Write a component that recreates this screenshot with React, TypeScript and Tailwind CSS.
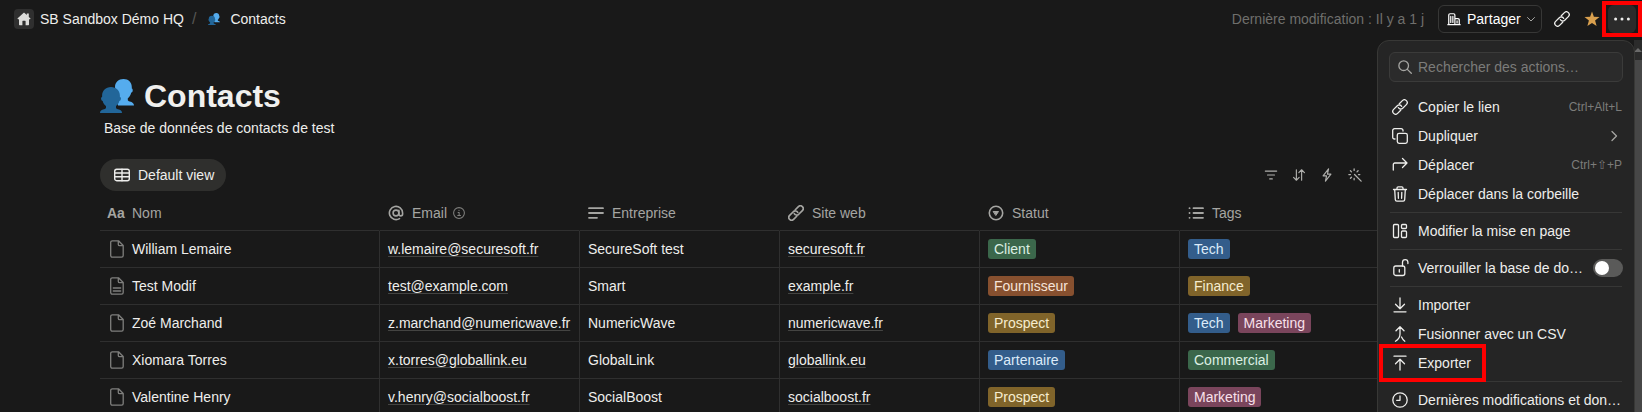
import type { ReactNode } from 'react';
import clsx from 'clsx';

type Tag = { label: string; color: keyof typeof tagColors };

const tagColors = {
  green: 'bg-[#3b674b] text-[#dcefe3]',
  orange: 'bg-[#87502f] text-[#f6e3d8]',
  yellow: 'bg-[#80642a] text-[#f6eccf]',
  blue: 'bg-[#335d8b] text-[#dcebf9]',
  pink: 'bg-[#7a455c] text-[#f8e0ea]',
};

const contacts: { name: string; filled?: boolean; email: string; company: string; site: string; status: Tag; tags: Tag[] }[] = [
  { name: 'William Lemaire', email: 'w.lemaire@securesoft.fr', company: 'SecureSoft test', site: 'securesoft.fr', status: { label: 'Client', color: 'green' }, tags: [{ label: 'Tech', color: 'blue' }] },
  { name: 'Test Modif', filled: true, email: 'test@example.com', company: 'Smart', site: 'example.fr', status: { label: 'Fournisseur', color: 'orange' }, tags: [{ label: 'Finance', color: 'yellow' }] },
  { name: 'Zoé Marchand', email: 'z.marchand@numericwave.fr', company: 'NumericWave', site: 'numericwave.fr', status: { label: 'Prospect', color: 'yellow' }, tags: [{ label: 'Tech', color: 'blue' }, { label: 'Marketing', color: 'pink' }] },
  { name: 'Xiomara Torres', email: 'x.torres@globallink.eu', company: 'GlobalLink', site: 'globallink.eu', status: { label: 'Partenaire', color: 'blue' }, tags: [{ label: 'Commercial', color: 'green' }] },
  { name: 'Valentine Henry', email: 'v.henry@socialboost.fr', company: 'SocialBoost', site: 'socialboost.fr', status: { label: 'Prospect', color: 'yellow' }, tags: [{ label: 'Marketing', color: 'pink' }] },
];

/* ---------- icons ---------- */

function Icon({ children, className, width = 1.3 }: { children: ReactNode; className?: string; width?: number }) {
  return (
    <svg viewBox="0 0 16 16" className={clsx('shrink-0', className ?? 'size-4')} fill="none" stroke="currentColor" strokeWidth={width} strokeLinecap="round" strokeLinejoin="round" aria-hidden="true">
      {children}
    </svg>
  );
}

const LinkIcon = ({ className, width = 1.3 }: { className?: string; width?: number }) => (
  <Icon className={className} width={width}>
    <g transform="rotate(-45 8 8)">
      <path d="M9.800 5.200H14.200a2.800 2.800 0 0 1 0 5.600H9a2.800 2.800 0 0 1-2.600-3.600" />
      <path d="M6.200 10.800H1.800a2.800 2.800 0 0 1 0-5.600H7a2.800 2.800 0 0 1 2.600 3.600" />
    </g>
  </Icon>
);

const People = ({ className }: { className: string }) => (
  <svg viewBox="0 0 34 34" className={clsx('shrink-0', className)} aria-hidden="true">
    <path fill="#55acee" d="M23.5 0c5 0 8.300 3.300 8.300 8v1.400c1 .1 1 1.800.9 2.600-.1.900-.8 1.700-1.500 1.600-.4 2.500-1.700 4.500-3.400 5.700v1.400c0 1 .6 1.300 2 1.700 2.500.7 4.200 1.600 4.200 4.100H18l-3-18.400C15 3.300 18.500 0 23.500 0Z" />
    <path fill="#226699" d="M11 8c5.300 0 8.900 3.500 8.900 8.700v1.200c1 .1 1.200 1 1 2.200-.2 1.200-.8 1.900-1.600 1.900-.4 2-1.500 3.900-3.300 5.100v1.400c0 1 .6 1.300 2 1.700 2.600.7 4 1.400 4 3.800H0c0-2.400 1.500-3.100 4-3.800 1.400-.4 2-.7 2-1.700v-1.400C4.200 25.900 3.100 24 2.700 22c-.8 0-1.400-.7-1.600-1.900-.2-1.200 0-2.100 1-2.200v-1.200C2.100 11.500 5.700 8 11 8Z" />
  </svg>
);

const PageIcon = ({ filled }: { filled?: boolean }) => (
  <svg viewBox="0 0 14 18" className="h-[18px] w-[14px] shrink-0 text-[#7f7f7d]" fill="none" stroke="currentColor" strokeWidth="1.3" strokeLinejoin="round" aria-hidden="true">
    <path d="M2.300.8H8.500L13.200 5.500V15.600a1.600 1.600 0 0 1-1.600 1.600H2.300A1.600 1.600 0 0 1 .7 15.600V2.400A1.600 1.600 0 0 1 2.300.8ZM8.300 1V4.400a1.300 1.300 0 0 0 1.300 1.300H13" />
    {filled && <path d="M3.300 11h7.400M3.300 14h7.400" strokeLinecap="round" />}
  </svg>
);

/* ---------- table ---------- */

function TagPill({ label, color }: Tag) {
  return <span className={clsx('flex h-5 items-center rounded-[3px] px-1.5', tagColors[color])}>{label}</span>;
}

function HeadCell({ icon, label, extra, first }: { icon: ReactNode; label: string; extra?: ReactNode; first?: boolean }) {
  return (
    <th scope="col" className={clsx('h-9 border-b border-b-[#2f2f2f] text-left font-normal', first ? 'px-[7px]' : 'border-l border-l-transparent px-2')}>
      <div className="flex items-center gap-2">
        {icon}
        <span>{label}</span>
        {extra}
      </div>
    </th>
  );
}

function Cell({ children }: { children: ReactNode }) {
  return <td className="h-[37px] border-b border-l border-[#2f2f2f] px-2 whitespace-nowrap">{children}</td>;
}

function CellLink({ href, children }: { href: string; children: ReactNode }) {
  return <a href={href} className="underline decoration-[#444442] decoration-1 underline-offset-2">{children}</a>;
}

function ContactsTable() {
  return (
    <table className="w-[1680px] table-fixed border-separate border-spacing-0">
      <colgroup>
        <col className="w-[279px]" />
        <col className="w-[200px]" />
        <col className="w-[200px]" />
        <col className="w-[200px]" />
        <col className="w-[200px]" />
        <col />
      </colgroup>
      <thead className="text-[#a5a5a2]">
        <tr>
          <HeadCell
            first
            label="Nom"
            icon={<span className="w-[17px] text-sm leading-none font-bold" aria-hidden="true">Aa</span>}
          />
          <HeadCell
            label="Email"
            icon={
              <Icon width={1.6}>
                <circle cx="8" cy="8" r="2.900" />
                <path d="M10.900 5.200V9a1.800 1.800 0 0 0 3.700 0V8A6.600 6.600 0 1 0 11.500 13.600" />
              </Icon>
            }
            extra={
              <Icon className="-ml-0.5 size-3 text-[#7f7f7d]" width={1.4}>
                <circle cx="8" cy="8" r="7.200" />
                <path d="M6.800 7.200H8.200V11M6.300 11.400H10M8 4.400v.1" />
              </Icon>
            }
          />
          <HeadCell label="Entreprise" icon={<Icon width={1.8}><path d="M1 3.200h14M1 8h14M1 12.800h8" /></Icon>} />
          <HeadCell label="Site web" icon={<LinkIcon width={1.7} />} />
          <HeadCell
            label="Statut"
            icon={
              <Icon width={1.6}>
                <circle cx="8" cy="8" r="6.700" />
                <path d="M5.500 6.500h5L8 10.200Z" fill="currentColor" strokeWidth="1" />
              </Icon>
            }
          />
          <HeadCell label="Tags" icon={<Icon width={1.8}><path d="M5.500 3.200H15M5.500 8H15M5.500 12.800H15M1.500 3.200h.1M1.500 8h.1M1.500 12.800h.1" /></Icon>} />
        </tr>
      </thead>
      <tbody className="text-[#eeeeec]">
        {contacts.map((c) => (
          <tr key={c.name}>
            <td className="h-[37px] border-b border-[#2f2f2f] pr-2 pl-2.5">
              <div className="flex items-center gap-2">
                <PageIcon filled={c.filled} />
                {c.name}
              </div>
            </td>
            <Cell><CellLink href={`mailto:${c.email}`}>{c.email}</CellLink></Cell>
            <Cell>{c.company}</Cell>
            <Cell><CellLink href={`https://${c.site}`}>{c.site}</CellLink></Cell>
            <Cell><div className="flex"><TagPill {...c.status} /></div></Cell>
            <Cell>
              <div className="flex gap-2">
                {c.tags.map((t) => <TagPill key={t.label} {...t} />)}
              </div>
            </Cell>
          </tr>
        ))}
      </tbody>
    </table>
  );
}

/* ---------- actions menu ---------- */

function MenuItem({ icon, label, hint }: { icon: ReactNode; label: string; hint?: ReactNode }) {
  return (
    <button type="button" role="menuitem" className="flex h-[29px] w-full items-center gap-2.5 pr-3 pl-3.5 text-left">
      {icon}
      <span className="flex-1 whitespace-nowrap">{label}</span>
      {hint}
    </button>
  );
}

const Divider = () => <hr className="mx-3 mt-1 mb-[3px] border-[#373736]" />;

const Shortcut = ({ children }: { children: ReactNode }) => <kbd className="font-[inherit] text-xs text-[#7c7c7a]">{children}</kbd>;

function ActionsMenu() {
  return (
    <div role="menu" className="absolute top-10 right-[7px] w-[258px] rounded-xl border border-[#383836] bg-[#252525] pt-[11px] pb-4 text-[#eeeeec]">
      <label className="mx-[11px] mb-2.5 flex h-[30px] items-center gap-1.5 rounded-md border border-[#3b3b3a] bg-[#2b2b2b] px-2">
        <Icon className="size-3.5 text-[#a5a5a2]" width={1.5}>
          <circle cx="6.500" cy="6.500" r="5.500" />
          <path d="m10.700 10.700 4.500 4.500" />
        </Icon>
        <input type="text" aria-label="Rechercher des actions" placeholder="Rechercher des actions…" className="w-full bg-transparent outline-none placeholder:text-[#7c7c7a]" />
      </label>
      <MenuItem icon={<LinkIcon />} label="Copier le lien" hint={<Shortcut>Ctrl+Alt+L</Shortcut>} />
      <MenuItem
        icon={<Icon width={1.3}><rect x="5.300" y="5.300" width="10" height="10" rx="1.800" /><path d="M3 11H2.500A1.800 1.800 0 0 1 .700 9.200V2.500A1.800 1.800 0 0 1 2.500.700H9.200A1.800 1.800 0 0 1 11 2.500V3" /></Icon>}
        label="Dupliquer"
        hint={<Icon className="size-4 text-[#a5a5a2]"><path d="m6 3.500 4.500 4.500L6 12.500" /></Icon>}
      />
      <MenuItem icon={<Icon width={1.3}><path d="M1.300 13V7.500A1.500 1.500 0 0 1 2.800 6H15M10.500 1.500 15 6l-4.500 4.500" /></Icon>} label="Déplacer" hint={<Shortcut>Ctrl+⇧+P</Shortcut>} />
      <MenuItem
        icon={<Icon width={1.3}><path d="M1.500 3.500h13M5 3.300V2A1.200 1.200 0 0 1 6.200.800H9.800A1.200 1.200 0 0 1 11 2V3.300M2.700 3.700l.6 9.900a1.600 1.600 0 0 0 1.600 1.500h6.200a1.600 1.600 0 0 0 1.600-1.500l.6-9.900M6.200 6.300l.2 6M9.800 6.300l-.2 6" /></Icon>}
        label="Déplacer dans la corbeille"
      />
      <Divider />
      <MenuItem
        icon={<Icon width={1.3}><rect x="1.500" y="1.500" width="5" height="13" rx="1" /><rect x="9.500" y="1.500" width="5" height="4" rx="1" /><rect x="9.500" y="8" width="5" height="6.500" rx="1" /></Icon>}
        label="Modifier la mise en page"
      />
      <Divider />
      <label className="flex h-[29px] items-center gap-2.5 pr-3 pl-3.5">
        <Icon className="size-4 overflow-visible" width={1.3}><rect x="1.800" y="6" width="11" height="9.500" rx="2" /><path d="M10.500 6V2.300a2.700 2.700 0 0 1 5.400 0V3.500M7.300 9.600v2.400" /></Icon>
        <span className="flex-1 whitespace-nowrap">Verrouiller la base de do…</span>
        <input
          type="checkbox"
          role="switch"
          className="h-[18px] w-[30px] shrink-0 appearance-none rounded-full bg-[#5a5a59] p-0.5 before:block before:size-3.5 before:rounded-full before:bg-white checked:bg-[#2383e2] checked:before:ml-3"
        />
      </label>
      <Divider />
      <MenuItem icon={<Icon width={1.3}><path d="M2 14.800h12M8 1v10.500M3.500 7.300 8 11.800l4.500-4.500" /></Icon>} label="Importer" />
      <MenuItem icon={<Icon width={1.3}><path d="M8 .800V8c0 3-1.500 5.500-4.500 7.200M4 4.800 8 .800l4 4M9.500 11c.8 1.700 1.800 3.200 3.300 4.200" /></Icon>} label="Fusionner avec un CSV" />
      <div className="relative">
        <MenuItem icon={<Icon width={1.3}><path d="M2 1.200h12M8 15V4.500M3.500 8.700 8 4.200l4.500 4.500" /></Icon>} label="Exporter" />
        <span className="pointer-events-none absolute -top-1 left-px h-[38px] w-[107px] border-4 border-[#ff0000]" />
      </div>
      <Divider />
      <MenuItem icon={<Icon width={1.3}><circle cx="8" cy="8" r="7.200" /><path d="M8 4v4.300H4.700" /></Icon>} label="Dernières modifications et don…" />
    </div>
  );
}

/* ---------- top bar ---------- */

function TopBar() {
  return (
    <header className="flex h-[38px] items-center justify-between pr-1.5 pl-3.5 text-[#eeeeec]">
      <nav aria-label="Fil d’Ariane" className="flex items-center">
        <a href="#" className="flex items-center gap-1.5">
          <span className="flex size-5 items-center justify-center rounded bg-[#2f2f2f]">
            <svg viewBox="0 0 14 14" className="size-3.5 fill-[#dcdcda]" aria-hidden="true">
              <path d="M7 .600 9.800 3V1.600h2V4.900L13.600 6.600 12.800 7.500 12 6.900V12.600a.6.600 0 0 1-.6.600H8.600V9.300a.5.500 0 0 0-.5-.5H5.900a.5.500 0 0 0-.5.500V13.200H2.600A.6.600 0 0 1 2 12.600V6.900L1.200 7.500.400 6.600Z" />
            </svg>
          </span>
          SB Sandbox Démo HQ
        </a>
        <span className="mx-2 text-base text-[#565654]">/</span>
        <a href="#" className="flex items-center gap-2.5 pl-1">
          <People className="size-3" />
          Contacts
        </a>
      </nav>
      <div className="flex items-center">
        <span className="mr-3.5 text-[#6f6f6c]">Dernière modification : Il y a 1 j</span>
        <button type="button" className="mr-3 flex h-7 w-[104px] items-center gap-1.5 rounded-md border border-[#373736] px-2 font-medium text-white">
          <Icon className="size-3.5" width={1.4}><path d="M1 14.500h14M2 14.500V3.500A1.500 1.500 0 0 1 3.500 2h4A1.500 1.500 0 0 1 9 3.500v11M9 7.500h3.500A1.500 1.500 0 0 1 14 9v5.500M4.300 5v7M6.700 5v7M11.500 10v2.500" /></Icon>
          Partager
          <Icon className="size-2 text-[#a5a5a2]" width={2}><path d="m1 5 7 7 7-7" /></Icon>
        </button>
        <button type="button" aria-label="Copier le lien"><LinkIcon /></button>
        <button type="button" aria-label="Favori" className="ml-3.5">
          <svg viewBox="0 0 16 16" className="size-4 fill-[#d9a04e]" aria-hidden="true">
            <path d="m8 .500 1.900 5.300 5.600.2-4.400 3.500 1.500 5.500L8 11.900l-4.600 3.100 1.500-5.500L.500 6l5.600-.2Z" />
          </svg>
        </button>
        <button type="button" aria-label="Actions" className="relative ml-2 flex h-7 w-7 items-center justify-center rounded-md bg-[#2b2b2b]">
          <svg viewBox="0 0 16 4" className="h-1 w-4 fill-[#eeeeec]" aria-hidden="true">
            <circle cx="1.600" cy="2" r="1.500" /><circle cx="8" cy="2" r="1.500" /><circle cx="14.400" cy="2" r="1.500" />
          </svg>
          <span className="pointer-events-none absolute -inset-x-1.5 -inset-y-1 border-4 border-[#ff0000]" />
        </button>
      </div>
    </header>
  );
}

export default function App() {
  return (
    <div className="relative h-screen overflow-hidden bg-[#191919] font-['Liberation_Sans',Arial,sans-serif] text-sm">
      <TopBar />
      <main className="pl-[100px]">
        <div className="flex h-20 items-end gap-2.5 pb-0.5">
          <People className="mb-[3px] size-[34px]" />
          <h1 className="text-[32px] leading-10 font-bold text-[#f0f0ee]">Contacts</h1>
        </div>
        <p className="pl-1 leading-5 text-[#eeeeec]">Base de données de contacts de test</p>
        <div className="mt-[21px] flex items-center justify-between pr-[280px]">
          <button type="button" className="flex h-8 items-center gap-2 rounded-full bg-[#2f2f2d] pr-3 pl-3.5 text-[#eeeeec]">
            <Icon width={1.4}><rect x=".7" y="2.300" width="14.600" height="11.400" rx="2" /><path d="M.700 6h14.600M.700 9.800h14.600M8 2.300v11.400" /></Icon>
            Default view
          </button>
          <div className="flex gap-3.5 text-[#b0b0ad]">
            <button type="button" aria-label="Filtrer"><Icon className="size-3.5"><path d="M1.500 3.500h13M4 8h8M6.500 12.500h3" /></Icon></button>
            <button type="button" aria-label="Trier"><Icon className="size-3.5"><path d="M5 2v12M1.800 10.800 5 14l3.200-3.200M11 14V2M7.800 5.200 11 2l3.200 3.200" /></Icon></button>
            <button type="button" aria-label="Automatisations"><Icon className="size-3.5"><path d="M9.800 1 3.500 9h4L6.200 15l6.300-8h-4Z" /></Icon></button>
            <button type="button" aria-label="Assistant"><Icon className="size-3.5" width={1.5}><path d="m7.500 7.500 7.500 7.500M7 1v1.800M7 12v1.500M1 7.500h1.800M12 7.500h1.500M2.800 3.200l1.200 1.200M11.500 3.200l-1.200 1.200M2.800 11.800l1.200-1.200" /></Icon></button>
          </div>
        </div>
        <div className="mt-1">
          <ContactsTable />
        </div>
      </main>
      <div className="absolute top-10 right-0 bottom-0 flex w-2 flex-col items-center bg-[#2b2b2b] pt-2" aria-hidden="true">
        <svg viewBox="0 0 8 4" className="h-1 w-2 fill-[#6a6a6a]"><path d="M4 0 8 4H0Z" /></svg>
        <span className="mt-2 w-full flex-1 bg-[#474747]" />
      </div>
      <ActionsMenu />
    </div>
  );
}
